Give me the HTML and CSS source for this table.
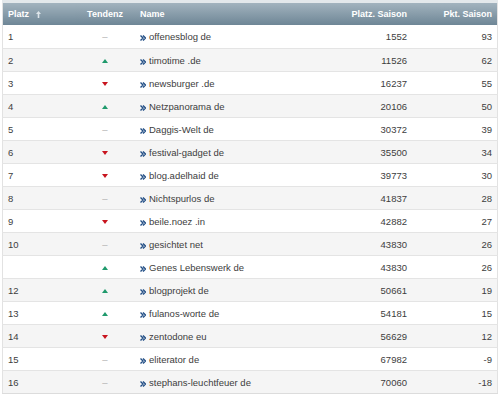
FILE: index.html
```html
<!DOCTYPE html>
<html lang="de">
<head>
    <meta charset="UTF-8">
    <title>Saison-Ranking</title>
    <link rel="stylesheet" href="styles.css">
</head>
<body>
    <div class="ranking">
        <table class="ranking-table">
            <thead>
                <tr>
                    <th class="col-platz">Platz
                        <svg class="sort-icon" width="5" height="7" viewBox="0 0 5 7"><path d="M2.5 0 L5 3 L3.3 3 L3.3 7 L1.7 7 L1.7 3 L0 3 Z" fill="#dde5ea"/></svg>
                    </th>
                    <th class="col-trend">Tendenz</th>
                    <th class="col-name">Name</th>
                    <th class="col-num">Platz. Saison</th>
                    <th class="col-pkt">Pkt. Saison</th>
                </tr>
            </thead>
            <tbody id="ranking-body"></tbody>
        </table>
    </div>

    <script>
        // Ranking der Saison (Tendenz: up / down / same)
        const ranking = [
            { platz: "1", tendenz: "same", name: "offenesblog de", saison: 1552, punkte: 93 },
            { platz: "2", tendenz: "up", name: "timotime .de", saison: 11526, punkte: 62 },
            { platz: "3", tendenz: "down", name: "newsburger .de", saison: 16237, punkte: 55 },
            { platz: "4", tendenz: "up", name: "Netzpanorama de", saison: 20106, punkte: 50 },
            { platz: "5", tendenz: "same", name: "Daggis-Welt de", saison: 30372, punkte: 39 },
            { platz: "6", tendenz: "down", name: "festival-gadget de", saison: 35500, punkte: 34 },
            { platz: "7", tendenz: "down", name: "blog.adelhaid de", saison: 39773, punkte: 30 },
            { platz: "8", tendenz: "same", name: "Nichtspurlos de", saison: 41837, punkte: 28 },
            { platz: "9", tendenz: "down", name: "beile.noez .in", saison: 42882, punkte: 27 },
            { platz: "10", tendenz: "same", name: "gesichtet net", saison: 43830, punkte: 26 },
            { platz: "", tendenz: "up", name: "Genes Lebenswerk de", saison: 43830, punkte: 26 },
            { platz: "12", tendenz: "up", name: "blogprojekt de", saison: 50661, punkte: 19 },
            { platz: "13", tendenz: "up", name: "fulanos-worte de", saison: 54181, punkte: 15 },
            { platz: "14", tendenz: "down", name: "zentodone eu", saison: 56629, punkte: 12 },
            { platz: "15", tendenz: "same", name: "eliterator de", saison: 67982, punkte: -9 },
            { platz: "16", tendenz: "same", name: "stephans-leuchtfeuer de", saison: 70060, punkte: -18 }
        ];

        const pfeil = '<svg class="link-icon" width="6" height="6" viewBox="0 0 6 6"><path d="M0.5 0.5 L3 3 L0.5 5.5 M3 0.5 L5.5 3 L3 5.5" fill="none" stroke="#234f86" stroke-width="1.4"/></svg>';

        document.getElementById("ranking-body").innerHTML = ranking.map(r => `
            <tr>
                <td>${r.platz}</td>
                <td class="trend">${r.tendenz === "same" ? '<span class="same">–</span>' : `<span class="${r.tendenz}"></span>`}</td>
                <td class="name"><a>${pfeil}${r.name}</a></td>
                <td class="num">${r.saison}</td>
                <td class="pkt">${r.punkte}</td>
            </tr>
        `).join("");
    </script>
</body>
</html>
```

FILE: styles.css
```css
:root {
    --head-top: #a2b3be;
    --head-bottom: #6e8696;
    --row-line: #e4e4e4;
    --row-alt: #f5f5f5;
    --text: #3d3d3d;
    --up: #1f9a6c;
    --down: #c8141e;
}

body {
    margin: 0;
    font-family: "Liberation Sans", Arial, sans-serif;
    color: var(--text);
    background-color: white;
}

.ranking {
    width: 496px;
    margin-left: 2px;
    border-top: 3px solid #e3e8eb;
}

.ranking-table {
    width: 100%;
    border-collapse: collapse;
    border-left: 1px solid #e2e2e2;
    border-right: 1px solid #e2e2e2;
    border-bottom: 1px solid #dcdcdc;
    font-size: 9.5px;
}

.ranking-table th {
    height: 22px;
    padding: 0 5px;
    background: linear-gradient(to bottom, var(--head-top), var(--head-bottom));
    color: white;
    font-weight: bold;
    font-size: 9px;
    text-align: left;
}

.ranking-table td {
    height: 22px;
    padding: 0 5px;
    border-top: 1px solid var(--row-line);
}

.ranking-table tbody tr:first-child td {
    border-top: none;
    height: 23px;
}

.ranking-table tbody tr:nth-child(even) td {
    background-color: var(--row-alt);
}

.ranking-table th.col-platz { width: 62px; }
.ranking-table th.col-trend { width: 50px; text-align: center; }
.ranking-table th.col-num { width: 72px; text-align: right; }
.ranking-table th.col-pkt { width: 75px; text-align: right; }

.sort-icon {
    margin-left: 4px;
    vertical-align: -1px;
}

.trend {
    text-align: center;
}

.same {
    color: #b0b0b0;
}

.up, .down {
    display: inline-block;
    width: 0;
    height: 0;
    border-left: 3.5px solid transparent;
    border-right: 3.5px solid transparent;
    vertical-align: 1px;
}

.up {
    border-bottom: 4px solid var(--up);
}

.down {
    border-top: 4px solid var(--down);
}

.name a {
    color: var(--text);
    text-decoration: none;
}

.link-icon {
    margin-right: 3px;
    vertical-align: -1px;
}

.num, .pkt {
    text-align: right;
}
```
